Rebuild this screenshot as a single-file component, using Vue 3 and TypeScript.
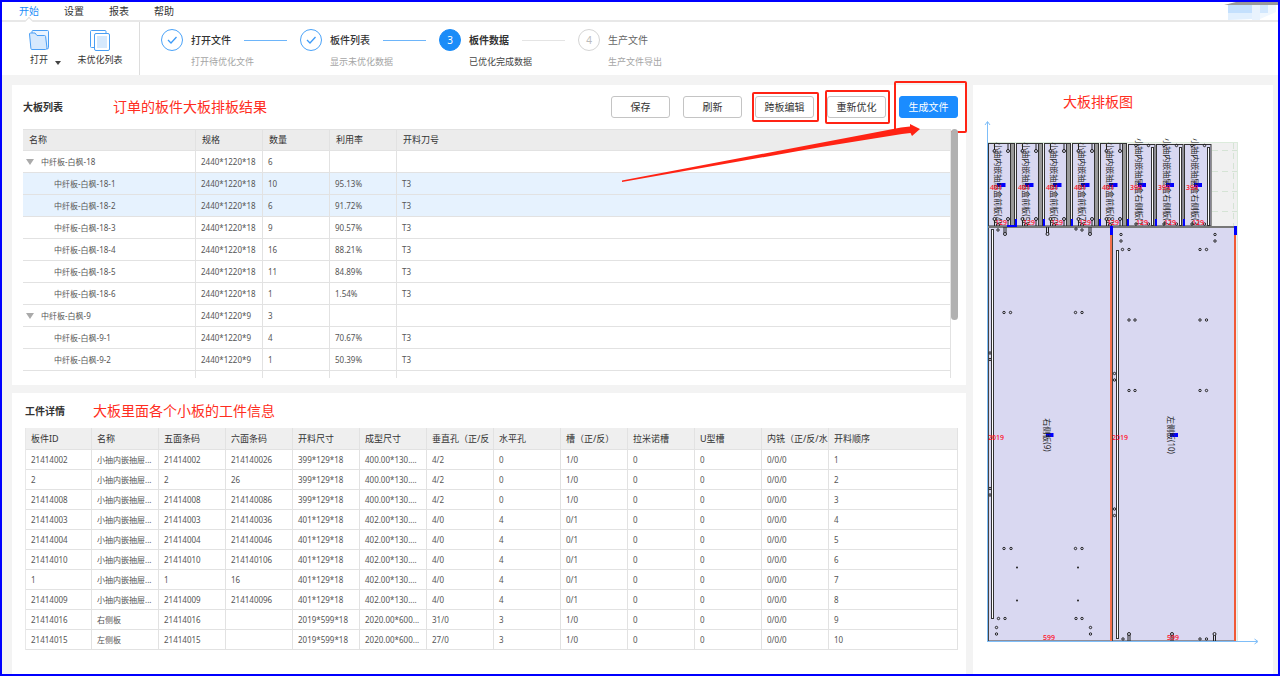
<script setup lang="ts">
interface BoardRow {
  name: string
  spec: string
  qty: string
  usage: string
  tool: string
  group?: boolean
  selected?: boolean
}

interface Step {
  no: number
  title: string
  desc: string
  state: 'done' | 'active' | 'wait'
}

const menus = ['开始', '设置', '报表', '帮助']

const steps: Step[] = [
  { no: 1, title: '打开文件', desc: '打开待优化文件', state: 'done' },
  { no: 2, title: '板件列表', desc: '显示未优化数据', state: 'done' },
  { no: 3, title: '板件数据', desc: '已优化完成数据', state: 'active' },
  { no: 4, title: '生产文件', desc: '生产文件导出', state: 'wait' },
]

const boards: BoardRow[] = [
  { name: '中纤板-白枫-18', spec: '2440*1220*18', qty: '6', usage: '', tool: '', group: true },
  { name: '中纤板-白枫-18-1', spec: '2440*1220*18', qty: '10', usage: '95.13%', tool: 'T3', selected: true },
  { name: '中纤板-白枫-18-2', spec: '2440*1220*18', qty: '6', usage: '91.72%', tool: 'T3', selected: true },
  { name: '中纤板-白枫-18-3', spec: '2440*1220*18', qty: '9', usage: '90.57%', tool: 'T3' },
  { name: '中纤板-白枫-18-4', spec: '2440*1220*18', qty: '16', usage: '88.21%', tool: 'T3' },
  { name: '中纤板-白枫-18-5', spec: '2440*1220*18', qty: '11', usage: '84.89%', tool: 'T3' },
  { name: '中纤板-白枫-18-6', spec: '2440*1220*18', qty: '1', usage: '1.54%', tool: 'T3' },
  { name: '中纤板-白枫-9', spec: '2440*1220*9', qty: '3', usage: '', tool: '', group: true },
  { name: '中纤板-白枫-9-1', spec: '2440*1220*9', qty: '4', usage: '70.67%', tool: 'T3' },
  { name: '中纤板-白枫-9-2', spec: '2440*1220*9', qty: '1', usage: '50.39%', tool: 'T3' },
  { name: '', spec: '', qty: '', usage: '', tool: '' },
]

const pieceHeads = [
  '板件ID', '名称', '五面条码', '六面条码', '开料尺寸', '成型尺寸', '垂直孔（正/反',
  '水平孔', '槽（正/反）', '拉米诺槽', 'U型槽', '内铣（正/反/水', '开料顺序',
]

const drawer = '小抽内嵌抽屉...'
const pieces: string[][] = [
  ['21414002', drawer, '21414002', '214140026', '399*129*18', '400.00*130....', '4/2', '0', '1/0'],
  ['2', drawer, '2', '26', '399*129*18', '400.00*130....', '4/2', '0', '1/0'],
  ['21414008', drawer, '21414008', '214140086', '399*129*18', '400.00*130....', '4/2', '0', '1/0'],
  ['21414003', drawer, '21414003', '214140036', '401*129*18', '402.00*130....', '4/0', '4', '0/1'],
  ['21414004', drawer, '21414004', '214140046', '401*129*18', '402.00*130....', '4/0', '4', '0/1'],
  ['21414010', drawer, '21414010', '214140106', '401*129*18', '402.00*130....', '4/0', '4', '0/1'],
  ['1', drawer, '1', '16', '401*129*18', '402.00*130....', '4/0', '4', '0/1'],
  ['21414009', drawer, '21414009', '214140096', '401*129*18', '402.00*130....', '4/0', '4', '0/1'],
  ['21414016', '右侧板', '21414016', '', '2019*599*18', '2020.00*600...', '31/0', '3', '1/0'],
  ['21414015', '左侧板', '21414015', '', '2019*599*18', '2020.00*600...', '27/0', '3', '1/0'],
].map((row, i) => [...row, '0', '0', '0/0/0', String(i + 1)])

/* Cutting layout */
const frontParts = [0, 1, 2, 3, 4].map((i) => ({ x: 988 + i * 28, no: i + 4 }))
const sideParts = [0, 1, 2].map((i) => ({ x: 1128 + i * 28, no: i + 1 }))
const edgeMarks = [0, 1, 2, 3, 4, 5, 6].map((i) => 1015 + i * 28)

const holes: [number, number][] = [
  [998, 230], [1076, 229], [1082, 230],
  [1004, 312.5], [1010.5, 312.5], [1075.5, 312.5], [1082, 312.5],
  [990, 353], [990, 359.5], [990, 488.5], [990, 495],
  [1004, 548.5], [1011, 548.5], [1075.5, 548.5], [1082, 548.5],
  [998.5, 618.5], [1005, 618.5], [1076, 618.5], [1082, 618.5],
  [996.5, 627.5], [1090.5, 627.5], [996.5, 634], [1090.5, 634],
  [1121, 234.5], [1121, 241], [1215, 234.5], [1215, 241],
  [1122.5, 249.5], [1129, 249.5], [1200, 249.5], [1206.5, 249.5],
  [1129, 320], [1135, 320], [1200, 320], [1206.5, 320],
  [1129, 390.5], [1135, 390.5], [1200, 390.5], [1206.5, 390.5],
  [1114.5, 373.5], [1114.5, 380], [1114.5, 509], [1114.5, 515.5],
  [1123, 639], [1200, 639], [1206.5, 639],
]
const dots: [number, number][] = [
  [1017, 567.5], [1078, 567.5], [1017, 600.5], [1078, 600.5],
]
const topPins = [1005, 1047.5, 1090]
const bottomPins = [1129, 1172, 1214.5]
</script>

<template>
  <div class="app">
    <nav class="menu">
      <a v-for="(m, i) in menus" :key="m" href="#" :class="{ on: i === 0 }">{{ m }}</a>
      <svg class="brand" width="54" height="19" viewBox="0 0 54 19" aria-hidden="true">
        <path d="M0 3L12 0H54V3Z" fill="#999" />
        <path d="M4 3H28V11H4Z" fill="#c4e0fd" />
        <path d="M4 11H28V17L4 18Z" fill="#e2f0fe" />
        <path d="M28 3H36V18H28Z" fill="#e9f3fd" />
        <path d="M36 3H44V11H36Z" fill="#d2e7fd" />
        <path d="M44 3H52V10L36 17V11H44Z" fill="#f0f7fe" />
      </svg>
    </nav>

    <header class="toolbar">
      <div class="tools">
        <button class="tool" type="button">
          <svg width="22" height="22" viewBox="0 0 22 22" fill="none" stroke="#4a9ff5">
            <path d="M4 5V2.500Q4 1.500 5 1.500H19.500Q20.500 1.500 20.500 2.500V18.500Q20.500 20 19 20" fill="#eaf4ff" />
            <path d="M1.500 5Q1.500 4 2.500 4H7L9 6.500H16.500Q17.500 6.500 17.600 7.500L19 19Q19 20.500 17.500 20.500H4Q3 20.500 2.900 19.500Z" fill="#d6e9fd" />
          </svg>
          <span>打开</span>
        </button>
        <i class="caret"></i>
        <button class="tool wide" type="button">
          <svg width="22" height="22" viewBox="0 0 22 22" fill="none" stroke="#4a9ff5">
            <path d="M5 18.500H2.500Q1.500 18.500 1.500 17.500V2.500Q1.500 1.500 2.500 1.500H16Q17 1.500 17 2.500V4" />
            <rect x="5.500" y="4.500" width="15" height="17" rx="1.500" fill="#fff" />
            <path d="M8 7H18V19H8Z" fill="#d6e9fd" stroke="none" />
          </svg>
          <span>未优化列表</span>
        </button>
      </div>
      <ol class="steps">
        <li v-for="s in steps" :key="s.no" :class="s.state">
          <span class="badge">
            <svg v-if="s.state === 'done'" width="10" height="8" viewBox="0 0 10 8" fill="none" stroke="#3d9bf8" stroke-width="1.300">
              <path d="M1 4L4 7L9.500 1" />
            </svg>
            <template v-else>{{ s.no }}</template>
          </span>
          <b>{{ s.title }}</b>
          <i v-if="s.no < 4" class="line"></i>
          <small>{{ s.desc }}</small>
        </li>
      </ol>
    </header>

    <main class="body">
      <div class="left">
        <section class="card list">
          <div class="bar">
            <h2>大板列表</h2>
            <p class="note">订单的板件大板排板结果</p>
            <div class="actions">
              <button type="button">保存</button>
              <button type="button">刷新</button>
              <span class="mark cross"><button type="button">跨板编辑</button></span>
              <span class="mark again"><button type="button">重新优化</button></span>
              <span class="mark make"><button type="button" class="primary">生成文件</button></span>
            </div>
          </div>
          <div class="scroll">
            <table class="boards">
              <colgroup><col class="c1" /><col class="c2" /><col class="c2" /><col class="c2" /><col /></colgroup>
              <thead>
                <tr><th>名称</th><th>规格</th><th>数量</th><th>利用率</th><th>开料刀号</th></tr>
              </thead>
              <tbody>
                <tr v-for="(b, i) in boards" :key="i" :class="{ sel: b.selected }">
                  <td :class="b.group ? 'parent' : 'child'"><i v-if="b.group" class="fold"></i>{{ b.name }}</td>
                  <td>{{ b.spec }}</td>
                  <td>{{ b.qty }}</td>
                  <td>{{ b.usage }}</td>
                  <td>{{ b.tool }}</td>
                </tr>
              </tbody>
            </table>
            <i class="thumb"></i>
          </div>
          <svg class="arrow" width="300" height="60" viewBox="0 0 300 60" aria-hidden="true">
            <path d="M1 56.500L280 3.500L289 2.500V0L299 5L291 12L289.500 9L281 10L200 23L1 58Z" fill="#ff2314" />
          </svg>
        </section>

        <section class="card detail">
          <div class="bar">
            <h2>工件详情</h2>
            <p class="note">大板里面各个小板的工件信息</p>
          </div>
          <table class="pieces">
            <colgroup><col class="first" /><col v-for="n in 11" :key="n" class="c" /><col /></colgroup>
            <thead>
              <tr><th v-for="h in pieceHeads" :key="h">{{ h }}</th></tr>
            </thead>
            <tbody>
              <tr v-for="(p, i) in pieces" :key="i">
                <td v-for="(v, j) in p" :key="j">{{ v }}</td>
              </tr>
            </tbody>
          </table>
        </section>
      </div>

      <section class="card plan">
        <p class="note">大板排板图</p>
        <svg class="drawing" width="285" height="540" viewBox="980 115 285 540">
          <rect x="988" y="142.500" width="249.500" height="498.500" fill="#f0f0f0" stroke="#dcebdc" />
          <g stroke="#d5e3d5" stroke-dasharray="6 4">
            <path d="M1212 150.500H1237M1212 171.500H1237M1212 191.500H1237M1212 211.500H1237" />
            <path d="M1233.500 143V227" />
          </g>

          <g v-for="p in frontParts" :key="p.x">
            <rect :x="p.x + 0.5" y="143.500" width="26" height="82.500" fill="#d9d8f1" stroke="#333" />
            <rect :x="p.x + 22.500" y="143.500" width="4" height="82.500" fill="#999" stroke="#333" />
            <g fill="none" stroke="#222">
              <path :d="`M${p.x + 6.500} 144v6M${p.x + 20} 144v6M${p.x + 6.500} 220v6M${p.x + 20} 220v6`" />
              <circle :cx="p.x + 6.500" cy="151" r="1.500" />
              <circle :cx="p.x + 20" cy="151" r="1.500" />
              <circle :cx="p.x + 6.500" cy="219" r="1.500" />
              <circle :cx="p.x + 20" cy="219" r="1.500" />
              <circle :cx="p.x + 10" cy="225" r="1.500" />
            </g>
            <rect :x="p.x + 9" y="183" width="8.500" height="4" fill="#00f" />
            <text class="name" :transform="`translate(${p.x + 7} 183) rotate(90)`">小抽内嵌抽屉盒前板({{ p.no }})</text>
          </g>

          <g v-for="p in sideParts" :key="p.x">
            <rect :x="p.x + 0.500" y="144.500" width="26.500" height="81.500" fill="#d9d8f1" stroke="#333" />
            <rect :x="p.x + 23.500" y="147.500" width="2" height="78" fill="#fff" stroke="#333" />
            <g fill="none" stroke="#222">
              <circle :cx="p.x + 8" cy="145.500" r="1.200" />
              <circle :cx="p.x + 20.500" cy="145.500" r="1.200" />
              <circle :cx="p.x + 8" cy="224" r="1.200" />
              <circle :cx="p.x + 20.500" cy="224" r="1.200" />
            </g>
            <rect :x="p.x + 10" y="183" width="8" height="4" fill="#00f" />
            <text class="name" :transform="`translate(${p.x + 8} 183) rotate(90)`">小抽内嵌抽屉盒右侧板({{ p.no }})</text>
          </g>

          <rect x="988.500" y="227.500" width="122" height="413.500" fill="#d9d8f1" stroke="#444" />
          <rect x="1112.500" y="227.500" width="122" height="413.500" fill="#d9d8f1" stroke="#444" />
          <path d="M988 227H1237" stroke="#777" stroke-width="2" />
          <path d="M1111 228V641" stroke="#f4704c" stroke-width="2" />
          <path d="M1235 228V641" stroke="#f05a35" stroke-width="2" />
          <rect x="991.500" y="229.500" width="2" height="389" fill="#fff" stroke="#333" />
          <rect x="1116.500" y="250.500" width="2" height="388" fill="#fff" stroke="#333" />

          <g fill="#00f">
            <rect v-for="x in edgeMarks" :key="x" :x="x" y="219" width="2" height="7" />
            <rect x="1007" y="225" width="10" height="2" />
            <rect x="1110" y="226" width="3" height="9" />
            <rect x="1234" y="226" width="3" height="9" />
          </g>

          <g fill="#d9d8f1" stroke="#222">
            <circle v-for="(h, i) in holes" :key="i" :cx="h[0]" :cy="h[1]" r="1.200" />
            <g v-for="x in topPins" :key="x">
              <path :d="`M${x - 1} 227v6M${x + 1} 227v6`" />
              <circle :cx="x" cy="234" r="1.500" />
            </g>
            <g v-for="x in bottomPins" :key="x">
              <path :d="`M${x - 1} 635v6M${x + 1} 635v6`" />
              <circle :cx="x" cy="634" r="1.500" />
            </g>
          </g>
          <circle v-for="(d, i) in dots" :key="i" :cx="d[0]" :cy="d[1]" r="1" fill="#222" />

          <rect x="1046" y="433" width="7.500" height="4" fill="#00f" />
          <rect x="1170" y="433" width="8" height="4" fill="#00f" />
          <text class="name" transform="translate(1044 435) rotate(90)">右侧板(9)</text>
          <text class="name" transform="translate(1168 435) rotate(90)">左侧板(10)</text>

          <g class="size">
            <template v-for="p in frontParts" :key="p.x">
              <text :x="p.x + 2" y="190">401</text>
              <text :x="p.x + 7" y="225">129</text>
            </template>
            <template v-for="p in sideParts" :key="p.x">
              <text :x="p.x + 2" y="190">399</text>
              <text :x="p.x + 8" y="225">129</text>
            </template>
            <text x="988" y="440">2019</text>
            <text x="1112" y="440">2019</text>
            <text x="1043" y="640">599</text>
            <text x="1167" y="640">599</text>
          </g>

          <g fill="none" stroke="#7fbef8">
            <path d="M987.500 641V122M985 125L987.500 121.500L990 125" />
            <path d="M987 641.500H1257M1254.500 639L1258 641.500L1254.500 644" />
          </g>
        </svg>
      </section>
    </main>
  </div>
</template>

<style>
html,
body {
  margin: 0;
  background: #f3f3f3;
}
</style>

<style scoped>
.app {
  box-sizing: border-box;
  min-height: 100vh;
  display: flex;
  flex-direction: column;
  border: 2px solid #0000ff;
  background: #f3f3f3;
  color: #333;
  font-family: "Noto Sans", "Noto Sans CJK SC", sans-serif;
  font-size: 8px;
  line-height: 12px;
}

h2,
p,
ol {
  margin: 0;
  padding: 0;
}

button {
  font: inherit;
  color: inherit;
  padding: 0;
}

.menu {
  display: flex;
  align-items: center;
  gap: 25px;
  height: 18px;
  padding-left: 17px;
  background: #fff;
  border-bottom: 2px solid #e8e8e8;
  font-size: 10px;
}

.menu a {
  position: relative;
  color: #333;
  text-decoration: none;
}

.menu a.on {
  color: #1b8cf8;
}

.menu a.on::after {
  content: "";
  position: absolute;
  left: 7px;
  bottom: -7px;
  width: 5px;
  height: 5px;
  background: #fff;
  border: solid #e0e0e0;
  border-width: 1px 0 0 1px;
  transform: rotate(45deg);
}

.brand {
  margin-left: auto;
  align-self: flex-start;
}

.toolbar {
  display: flex;
  height: 53px;
  background: #fff;
}

.tools {
  display: flex;
  box-sizing: border-box;
  width: 138px;
  padding: 7px 0 0 24px;
  border-right: 1px solid #ddd;
}

.tool {
  display: flex;
  flex-direction: column;
  align-items: center;
  gap: 3px;
  width: 26px;
  height: 40px;
  border: 0;
  background: none;
  font-size: 9px;
  white-space: nowrap;
}

.tool.wide {
  width: 50px;
}

.caret {
  width: 0;
  height: 0;
  margin: 32px 14px 0 3px;
  border: solid transparent;
  border-width: 4px 3px 0;
  border-top-color: #444;
}

.steps {
  display: flex;
  list-style: none;
  padding: 7px 0 0 21px;
}

.steps li {
  display: grid;
  grid-template-columns: 22px 40px 43px;
  grid-template-rows: 22px 22px;
  column-gap: 8px;
  align-items: center;
  width: 139px;
}

.steps .badge {
  box-sizing: border-box;
  display: flex;
  align-items: center;
  justify-content: center;
  width: 22px;
  height: 22px;
  border: 1px solid #4ba3f8;
  border-radius: 50%;
  font-size: 10px;
}

.steps b {
  font-size: 10px;
  white-space: nowrap;
}

.steps .line {
  height: 1px;
  margin-left: 5px;
  width: 43px;
  background: #6db5fa;
}

.steps small {
  grid-column: 2 / 4;
  grid-row: 2;
  font-size: 9px;
  color: #a5a5a5;
}

.steps .done b {
  font-weight: 500;
}

.steps .active .badge {
  background: #1b8cf8;
  border-color: #1b8cf8;
  color: #fff;
}

.steps .active small {
  color: #444;
}

.steps .active .line {
  background: #e4e4e4;
}

.steps .wait .badge {
  border-color: #d5d5d5;
  color: #bbb;
}

.steps .wait b {
  font-weight: 400;
  color: #666;
}

.body {
  flex: 1;
  display: flex;
  gap: 7px;
  padding: 10px 5px 0 10px;
}

.left {
  flex: 1;
  min-width: 0;
  display: flex;
  flex-direction: column;
  gap: 8px;
}

.card {
  position: relative;
  background: #fff;
}

.list {
  padding: 0 8px 7px 11px;
}

.detail {
  flex: 1;
  padding: 0 8px 24px 13px;
}

.plan {
  flex: 0 0 300px;
}

.bar {
  display: flex;
  align-items: center;
  height: 44px;
}

.detail .bar {
  height: 35px;
}

h2 {
  width: 90px;
  font-size: 10px;
  font-weight: 700;
}

.detail h2 {
  width: 68px;
}

.note {
  color: #ff2d21;
  font-size: 14px;
  line-height: 20px;
}

.plan .note {
  padding: 7px 0 3px;
  text-align: center;
  margin-right: 50px;
}

.actions {
  display: flex;
  gap: 13px;
  margin-left: auto;
}

.actions button {
  width: 59px;
  height: 22px;
  background: #fff;
  border: 1px solid #c4c4c4;
  border-radius: 3px;
  font-size: 10px;
  display: block;
}

.actions .primary {
  background: #1b8cff;
  border-color: #1b8cff;
  color: #fff;
}

.mark {
  position: relative;
}

.mark::after {
  content: "";
  position: absolute;
  border: 2px solid #ff2314;
  border-radius: 2px;
  pointer-events: none;
}

.cross::after {
  inset: -4px -5px -4px -3px;
}

.again::after {
  inset: -6px -4px -6px -2px;
}

.make::after {
  inset: -15px -9px -15px -5px;
}

.scroll {
  position: relative;
  max-height: 249px;
  overflow: hidden;
  padding-right: 7px;
}

.thumb {
  position: absolute;
  top: 0;
  right: 0;
  width: 7px;
  height: 191px;
  border-radius: 4px;
  background: #b1b1b1;
}

.arrow {
  position: absolute;
  right: 45px;
  top: 39px;
}

table {
  width: 100%;
  table-layout: fixed;
  border-collapse: separate;
  border-spacing: 0;
  color: #555;
}

th,
td {
  box-sizing: border-box;
  padding: 0 5px;
  border: solid #e2e2e2;
  border-width: 0 1px 1px 0;
  overflow: hidden;
  white-space: nowrap;
  text-align: left;
}

th {
  background: #ececec;
  color: #333;
  font-size: 9px;
  font-weight: 400;
}

.boards th {
  height: 22px;
  padding-left: 6px;
  border-top: 1px solid #e2e2e2;
}

.boards td {
  height: 22px;
}

.boards .c1 {
  width: 173px;
}

.boards .c2 {
  width: 67px;
}

.boards .child {
  padding-left: 31px;
}

.boards .parent {
  padding-left: 3px;
}

.fold {
  display: inline-block;
  margin-right: 7px;
  border: solid transparent;
  border-width: 6px 4px 0;
  border-top-color: #aaa;
}

.sel td {
  background: #e6f2fe;
}

.pieces {
  border-left: 1px solid #e8e8e8;
}

.pieces .first {
  width: 66px;
}

.pieces .c {
  width: 67px;
}

.pieces th {
  height: 22px;
  padding-right: 0;
  background: #efefef;
}

.pieces td {
  height: 20px;
  padding-right: 0;
}

.drawing {
  display: block;
  margin-left: 7px;
}

.name {
  font-size: 8px;
  fill: #222;
  text-anchor: middle;
}

.size {
  font-size: 7px;
  font-weight: 500;
  fill: #ff0a1e;
}
</style>
